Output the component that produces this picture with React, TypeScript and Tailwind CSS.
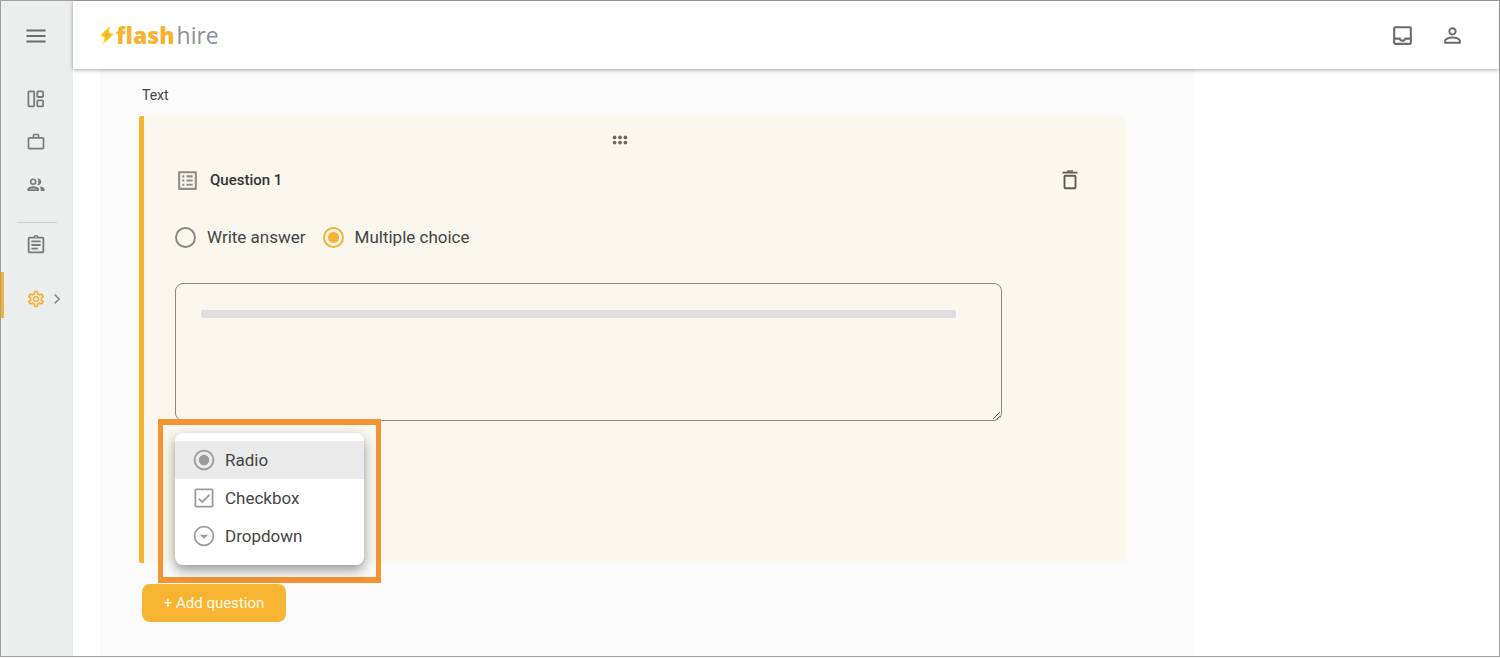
import { useState } from "react";
import type { ReactNode } from "react";
import {
  MdChevronRight,
  MdOutlineAssignment,
  MdOutlineInbox,
  MdOutlineListAlt,
  MdOutlineSettings,
  MdPersonOutline,
  MdWorkOutline,
} from "react-icons/md";

function MenuIcon() {
  return (
    <svg width="20" height="14" viewBox="0 0 20 14" fill="none" stroke="currentColor" strokeWidth="1.8">
      <path d="M0.5 1.5H19.5M0.5 7H19.5M0.5 12.5H19.5" />
    </svg>
  );
}

function DashboardIcon() {
  return (
    <svg width="18" height="18" viewBox="0 0 18 18" fill="none" stroke="currentColor" strokeWidth="1.8">
      <rect x="1.4" y="1.4" width="5.8" height="15" rx="0.8" />
      <rect x="10.3" y="1.4" width="5.8" height="5.6" rx="0.8" />
      <rect x="10.3" y="10.3" width="5.8" height="6.1" rx="0.8" />
    </svg>
  );
}

function PeopleIcon() {
  return (
    <svg width="18" height="14" viewBox="0 0 18 14">
      <circle cx="6.2" cy="3.8" r="2.5" fill="none" stroke="currentColor" strokeWidth="1.6" />
      <path d="M10.2 0.6A3.3 3.3 0 1 1 10.2 7A5.2 5.2 0 0 0 10.2 0.6Z" fill="currentColor" />
      <path d="M0.4 13V11.3C0.4 9.2 3.9 8.2 6.2 8.2S12 9.2 12 11.3V13Z" fill="currentColor" />
      <path d="M2.2 11.6C3.2 10.6 4.8 10.2 6.2 10.2S9.200 10.6 10.2 11.600Z" fill="#eceeed" fillOpacity="0.55" />
      <path d="M12.4 8.3C15 8.700 17.600 9.700 17.600 11.500V13H13.700V11.300C13.700 10.100 13.200 9.100 12.400 8.300Z" fill="currentColor" />
    </svg>
  );
}

function TrashIcon() {
  return (
    <svg width="16" height="20" viewBox="0 0 16 20" fill="none" stroke="currentColor">
      <path d="M0.5 2.6H15.5" strokeWidth="1.8" />
      <path d="M5 1.1H11" strokeWidth="1.4" />
      <rect x="2.5" y="5.7" width="11" height="12.6" rx="1" strokeWidth="1.9" />
    </svg>
  );
}

function DragIcon() {
  return (
    <svg width="16" height="10" viewBox="0 0 16 10" fill="currentColor">
      <circle cx="2.6" cy="2.4" r="1.9" />
      <circle cx="8" cy="2.4" r="1.9" />
      <circle cx="13.4" cy="2.4" r="1.9" />
      <circle cx="2.6" cy="7.6" r="1.9" />
      <circle cx="8" cy="7.6" r="1.9" />
      <circle cx="13.4" cy="7.6" r="1.9" />
    </svg>
  );
}

function RadioIcon() {
  return (
    <svg width="22" height="22" viewBox="0 0 22 22">
      <circle cx="11" cy="11" r="9.4" fill="none" stroke="currentColor" strokeWidth="1.8" />
      <circle cx="11" cy="11" r="5.2" fill="currentColor" />
    </svg>
  );
}

function CheckboxIcon() {
  return (
    <svg width="22" height="22" viewBox="0 0 22 22" fill="none" stroke="currentColor" strokeWidth="1.8">
      <rect x="2.4" y="2.4" width="17.2" height="17.2" rx="1" />
      <path d="M5.8 11.6L9.3 15L16.4 7.8" />
    </svg>
  );
}

function DropdownIcon() {
  return (
    <svg width="22" height="22" viewBox="0 0 22 22">
      <circle cx="11" cy="11" r="9.4" fill="none" stroke="currentColor" strokeWidth="1.8" />
      <path d="M6.8 9.8H15.2L11 13.8Z" fill="currentColor" />
    </svg>
  );
}

function Bolt() {
  return (
    <svg width="14" height="18" viewBox="0 0 14 18">
      <defs>
        <radialGradient id="bolt" cx="0.5" cy="0.5" r="0.5">
          <stop offset="0" stopColor="#f5a623" />
          <stop offset="0.9" stopColor="#fddc26" />
        </radialGradient>
      </defs>
      <path d="M9.8 0.4L0.4 9.6L5 11L3.4 17.8L13.600 8.2L8.600 6.8Z" fill="url(#bolt)" stroke="url(#bolt)" strokeWidth="0.6" strokeLinejoin="round" />
    </svg>
  );
}

function NavLink({ label, children }: { label: string; children: ReactNode }) {
  return (
    <a href="#" aria-label={label} className="flex h-[43px] items-center pl-[23px] text-[#7a7c7b]">
      <span className="flex w-6 justify-center">{children}</span>
    </a>
  );
}

function Sidebar() {
  return (
    <aside className="flex w-18 shrink-0 flex-col bg-[#eceeed]">
      <button type="button" aria-label="Menu" className="flex h-[69px] items-center pl-[25px] text-[#6b6d6c]">
        <MenuIcon />
      </button>
      <nav className="flex flex-col pt-[7px]">
        <NavLink label="Dashboard"><DashboardIcon /></NavLink>
        <NavLink label="Jobs"><MdWorkOutline size={20} /></NavLink>
        <NavLink label="Candidates"><PeopleIcon /></NavLink>
        <hr className="mx-4 mt-4 border-[#cfd1d0]" />
        <NavLink label="Forms"><MdOutlineAssignment size={22} /></NavLink>
        <a
          href="#"
          aria-label="Settings"
          aria-current="page"
          className="mt-[6px] flex h-[46px] items-center border-l-3 border-[#f7b133] pt-2 pl-5 text-[#f7b133]"
        >
          <span className="flex w-6 justify-center"><MdOutlineSettings size={20} /></span>
          <MdChevronRight size={20} className="-ml-px text-[#8f9190]" />
        </a>
      </nav>
    </aside>
  );
}

function Header() {
  return (
    <header className="relative flex h-[68px] shrink-0 items-center justify-between bg-white pr-[34px] pl-[27px] shadow-[0_1px_4px_rgba(0,0,0,0.35)]">
      <a href="#" className="flex items-center gap-[2px] font-['Open_Sans',sans-serif] text-[23px] leading-8">
        <Bolt />
        <span className="font-extrabold text-[#f9b233]">flash</span>
        <span className="font-normal text-[#8f8f96]">hire</span>
      </a>
      <div className="flex items-center gap-[25px] text-[#6c6c6c]">
        <button type="button" aria-label="Inbox"><MdOutlineInbox size={25} /></button>
        <button type="button" aria-label="Account"><MdPersonOutline size={25} /></button>
      </div>
    </header>
  );
}

const answerKinds = ["Write answer", "Multiple choice"];

const choiceKinds = [
  { label: "Radio", icon: <RadioIcon /> },
  { label: "Checkbox", icon: <CheckboxIcon /> },
  { label: "Dropdown", icon: <DropdownIcon /> },
];

function QuestionCard() {
  const [kind, setKind] = useState("Multiple choice");
  const [choice, setChoice] = useState("Radio");
  return (
    <section className="max-w-[987px] rounded-l-xs border-l-[5px] border-[#f7b133] bg-[#faf7ef] pr-12 pb-[142px] pl-[31px]">
      <div className="flex h-12 items-center justify-center pr-[14px] text-[#6b6862]">
        <DragIcon />
      </div>
      <div className="flex h-8 items-center text-[#5f5d59]">
        <MdOutlineListAlt size={25} className="text-[#8f8d89]" />
        <h2 className="ml-[10px] text-[15px] leading-5 font-medium text-[#333]">Question 1</h2>
        <button type="button" aria-label="Delete question" className="ml-auto">
          <TrashIcon />
        </button>
      </div>
      <div className="mt-[29px] flex h-6 items-center gap-[17px]">
        {answerKinds.map((label) => (
          <label key={label} className="flex items-center gap-[11px] text-[17px] leading-6 text-[#444]">
            <input
              type="radio"
              name="kind"
              checked={kind === label}
              onChange={() => setKind(label)}
              className="size-[21px] appearance-none rounded-full border-2 border-[#8a8885] checked:border-[#f7b133] checked:bg-[radial-gradient(circle,#f7b133_5px,transparent_6px)]"
            />
            {label}
          </label>
        ))}
      </div>
      <div className="relative mt-[34px] max-w-[827px]">
        <textarea
          aria-label="Question text"
          className="block h-[138px] w-full rounded-lg border border-[#8a8885] bg-transparent px-6 py-4"
        />
        <div className="absolute top-[27px] right-[46px] left-[26px] h-2 rounded-xs bg-[#dedee0]" />
        <div className="absolute top-[136px] left-[-17px] h-[164px] w-[223px] border-x-[5px] border-y-[6px] border-[#f39331]">
          <div
            role="menu"
            className="mx-3 mt-2 flex h-[132px] w-[189px] flex-col rounded-lg bg-white pt-2 shadow-[0_5px_12px_rgba(0,0,0,0.4)]"
          >
            {choiceKinds.map(({ label, icon }) => (
              <button
                key={label}
                type="button"
                role="menuitemradio"
                aria-checked={choice === label}
                onClick={() => setChoice(label)}
                className="flex h-[38px] items-center gap-[10px] pl-[18px] text-[17px] leading-6 text-[#444] aria-checked:bg-[#eaeaea]"
              >
                <span className="text-[#9b9b9b]">{icon}</span>
                {label}
              </button>
            ))}
          </div>
        </div>
      </div>
    </section>
  );
}

export default function App() {
  return (
    <div className="flex min-h-[calc(100vh-1px)] border border-[#a0a0a0] bg-white font-[Roboto,sans-serif]">
      <Sidebar />
      <div className="flex min-w-0 flex-1 flex-col">
        <Header />
        <main className="ml-[27px] w-full max-w-[1094px] flex-1 bg-[#fafafa] pr-[68px] pl-[39px]">
          <h1 className="pt-4 pb-[11px] pl-[3px] text-[14px] leading-5 text-[#444]">Text</h1>
          <QuestionCard />
          <button
            type="button"
            className="mt-[21px] ml-[3px] h-[38px] w-36 rounded-lg bg-[#f7b433] text-[15px] leading-5 text-[#fffbe8]"
          >
            + Add question
          </button>
        </main>
      </div>
    </div>
  );
}
